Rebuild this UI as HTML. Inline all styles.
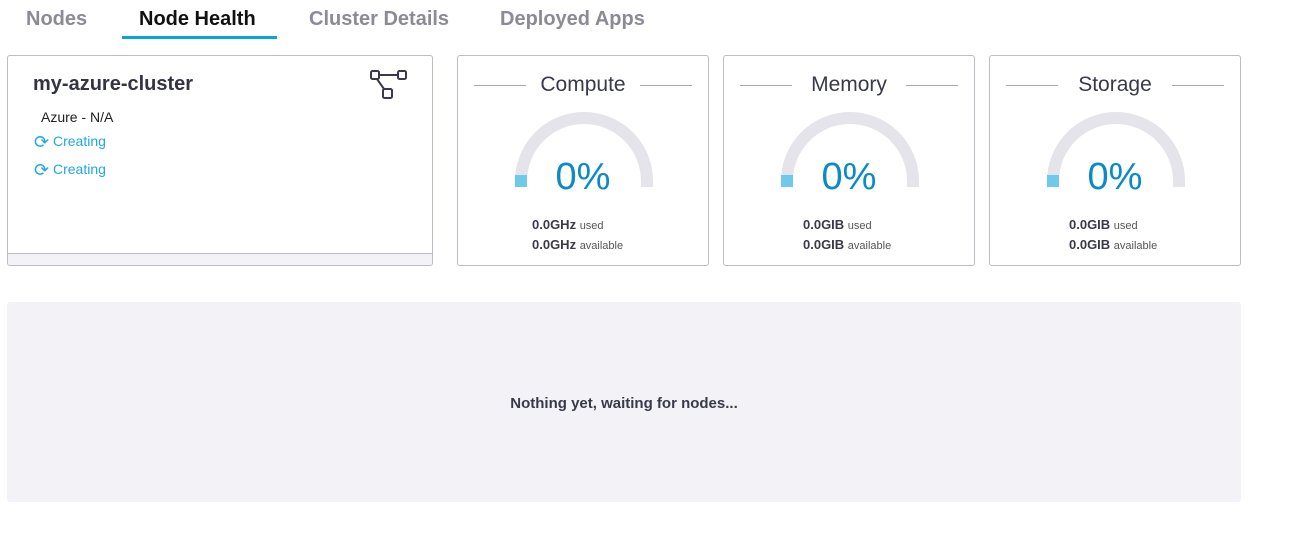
<!DOCTYPE html>
<html><head><style>
*{box-sizing:border-box;margin:0;padding:0}
body{width:1290px;height:558px;background:#fff;font-family:"Liberation Sans",sans-serif;position:relative;overflow:hidden;color:#39394a}
.tab{position:absolute;top:8px;font-size:20px;font-weight:bold;color:#8b8a96}
.card{position:absolute;top:55px;height:211px;border:1px solid #bcbcc4;border-radius:3px;background:#fff}
.g{width:252px}
.gt{position:absolute;top:17px;left:0;right:0;text-align:center;font-size:21px;color:#39394a}
.ln{position:absolute;top:29px;height:1px;background:#a8a8b0;width:52px}
.pct{position:absolute;top:100px;left:0;right:0;text-align:center;font-size:38px;color:#0a8ac9}
.st{position:absolute;left:74px;font-size:13px;font-weight:bold;color:#39394a}
.st span{font-size:11px;font-weight:normal;color:#555}
</style></head><body>
<div class="tab" style="left:26px">Nodes</div>
<div class="tab" style="left:139px;color:#111">Node Health</div>
<div style="position:absolute;left:122px;top:36px;width:155px;height:3px;background:#0aa4dc"></div>
<div class="tab" style="left:309px">Cluster Details</div>
<div class="tab" style="left:500px">Deployed Apps</div>

<div class="card" style="left:7px;width:426px;overflow:hidden">
 <div style="position:absolute;left:25px;top:17px;font-size:20px;font-weight:bold;color:#333344">my-azure-cluster</div>
 <svg style="position:absolute;left:362px;top:14px" width="40" height="32" viewBox="0 0 40 32" fill="none" stroke="#39394a" stroke-width="2"><rect x="1" y="1" width="8" height="8" rx="1.5"/><rect x="28" y="1" width="8" height="8" rx="1.5"/><rect x="13" y="19" width="9" height="9" rx="1.5"/><path d="M9 5H28M7 9L14 19"/></svg>
 <div style="position:absolute;left:33px;top:53px;font-size:14px;color:#222">Azure - N/A</div>
 <div style="position:absolute;left:26px;top:76px;font-size:14px;color:#1ea8e0">
  <div style="height:28px"><span style="font-size:18px;vertical-align:-2px">⟳</span> Creating</div>
  <div><span style="font-size:18px;vertical-align:-2px">⟳</span> Creating</div>
 </div>
 <div style="position:absolute;left:0;right:0;bottom:0;height:12px;background:#f3f3f7;border-top:1px solid #bcbcc4"></div>
</div>

<div class="card g" style="left:457px">
 <div class="ln" style="left:16px"></div><div class="ln" style="right:16px"></div>
 <div class="gt">Compute</div>
 <svg style="position:absolute;left:0;top:0" width="252" height="211"><path d="M63 131V125A63 63 0 0 1 189 125V131" stroke="#e4e4ea" stroke-width="12" fill="none"/><rect x="57" y="119" width="12" height="12" fill="#6fc9ea"/></svg>
 <div class="pct">0%</div>
 <div class="st" style="top:161px">0.0GHz <span>used</span></div>
 <div class="st" style="top:181px">0.0GHz <span>available</span></div>
</div>
<div class="card g" style="left:723px">
 <div class="ln" style="left:16px"></div><div class="ln" style="right:16px"></div>
 <div class="gt">Memory</div>
 <svg style="position:absolute;left:0;top:0" width="252" height="211"><path d="M63 131V125A63 63 0 0 1 189 125V131" stroke="#e4e4ea" stroke-width="12" fill="none"/><rect x="57" y="119" width="12" height="12" fill="#6fc9ea"/></svg>
 <div class="pct">0%</div>
 <div class="st" style="top:161px;left:79px">0.0GIB <span>used</span></div>
 <div class="st" style="top:181px;left:79px">0.0GIB <span>available</span></div>
</div>
<div class="card g" style="left:989px">
 <div class="ln" style="left:16px"></div><div class="ln" style="right:16px"></div>
 <div class="gt">Storage</div>
 <svg style="position:absolute;left:0;top:0" width="252" height="211"><path d="M63 131V125A63 63 0 0 1 189 125V131" stroke="#e4e4ea" stroke-width="12" fill="none"/><rect x="57" y="119" width="12" height="12" fill="#6fc9ea"/></svg>
 <div class="pct">0%</div>
 <div class="st" style="top:161px;left:79px">0.0GIB <span>used</span></div>
 <div class="st" style="top:181px;left:79px">0.0GIB <span>available</span></div>
</div>

<div style="position:absolute;left:7px;top:302px;width:1234px;height:200px;background:#f3f3f7;border-radius:3px;text-align:center;padding-top:93px;font-size:15px;font-weight:bold;color:#39394a">Nothing yet, waiting for nodes...</div>
</body></html>
